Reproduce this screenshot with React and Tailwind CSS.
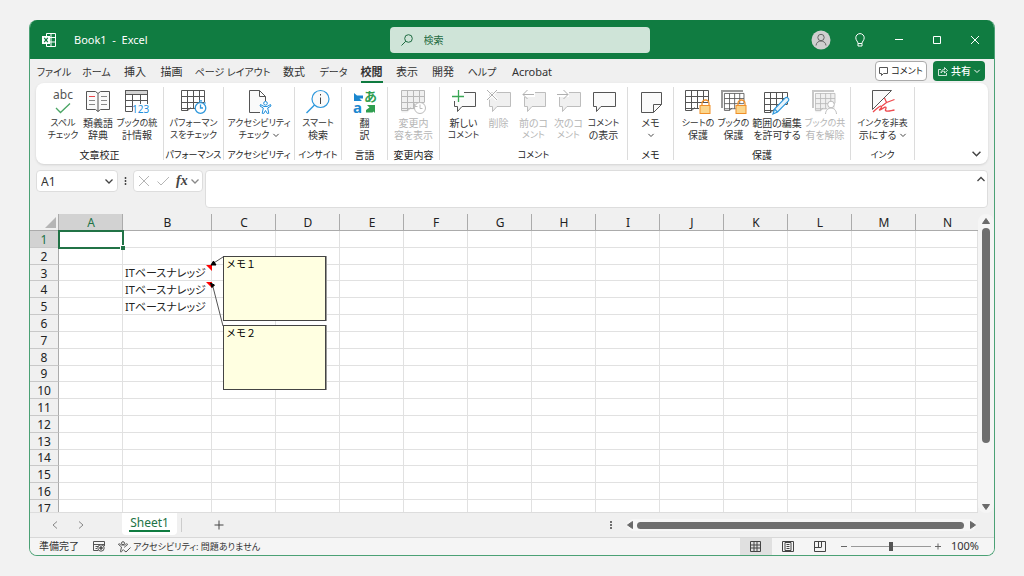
import React from "react";

const cols = "ABCDEFGHIJKLMN".split("");
const rows = Array.from({ length: 17 }, (_, i) => i + 1);
const memoRows = [3, 4, 5];

// Labels made mostly of katakana are set one step smaller so that they stay compact.
const isKana = (s) => (s.match(/[ァ-ヶー]/g) || []).length >= 3;

function Svg({ w = 24, h = 24, vb, className = "", children }) {
  return (
    <svg
      width={w}
      height={h}
      viewBox={vb || `0 0 ${w} ${h}`}
      fill="none"
      stroke="#555"
      strokeWidth="1"
      aria-hidden="true"
      className={`shrink-0 overflow-visible ${className}`}
    >
      {children}
    </svg>
  );
}

function Chevron({ up, size = 8, color = "#444" }) {
  return (
    <Svg w={size} h={size} vb="0 0 8 8">
      <path d={up ? "M0.5 6 4 2.5 7.5 6" : "M0.5 2.5 4 6 7.5 2.5"} stroke={color} strokeWidth="1.3" />
    </Svg>
  );
}

function Mesh({ stroke = "#555", fill = "none" }) {
  return (
    <g stroke={stroke}>
      <path d="M0.5 0.5H23.5V19.5H9L6.5 22.5H0.5Z" fill={fill} stroke="none" />
      <path d="M23.5 12V0.5H0.5V20.5H7L9.5 17.5M0.5 6.5H23.5M0.5 12.5H23.5M0.5 18.5H14M6.5 0.5V20M12.5 0.5V18.5M18.5 0.5V12.5" />
    </g>
  );
}

const Bubble = ({ stroke = "#555", fill = "#fff" }) => (
  <path d="M2.5 2.5H23.5V16.5H10L5.5 21.5V16.5H2.5Z" stroke={stroke} fill={fill} />
);

const Lock = () => (
  <g stroke="#f09028">
    <path d="M17 16.5V13.5a3 3 0 0 1 7 0V16.5" fill="none" strokeWidth="1.3" />
    <rect x="15" y="15.5" width="10" height="8" fill="#fbd68c" />
  </g>
);

const icons = {
  spell: (
    <Svg>
      <text x="12" y="9" textAnchor="middle" fontSize="12" fill="#555" stroke="none" fontFamily="Noto Sans">abc</text>
      <path d="M5 18 9.5 22.5 19 13.5" stroke="#4aa564" strokeWidth="1.3" />
    </Svg>
  ),
  book: (
    <Svg>
      <path d="M0.5 1.5H9.5L12 3.5 14.5 1.5H23.5V19.5H14.5L12 21.5 9.5 19.5H0.5ZM12 3.5V21.5" fill="#fafafa" />
      <path d="M3 6.5H9" stroke="#e8474c" />
      <path d="M3 10.5H9M3 14.5H9M15 6.5H21M15 10.5H21M15 14.5H21" stroke="#888" />
    </Svg>
  ),
  stats: (
    <Svg>
      <path d="M0.5 0.5H22.5V4.5H0.5Z" fill="#d4d4d4" />
      <path d="M22.5 14V0.5H0.5V21.5H7M0.5 10.5H22.5M0.5 16.5H8M7.5 4.5V21.5M15.5 4.5V14" />
      <text x="7" y="23" fontSize="10" fill="#1f8fdc" stroke="none" fontFamily="Noto Sans">123</text>
    </Svg>
  ),
  perf: (
    <Svg w={26}>
      <Mesh />
      <circle cx="19.5" cy="18" r="5.3" stroke="#2e98dc" fill="#fff" strokeWidth="1.3" />
      <path d="M19.5 14.5V18H22M18 10.8H21M23.5 13.5 24.5 12.5" stroke="#2e98dc" strokeWidth="1.3" />
    </Svg>
  ),
  access: (
    <Svg>
      <path d="M13 22.5H2.5V0.5H12.5L18.5 6.5V11M12.5 0.5V6.5H18.5" fill="#fafafa" />
      <g stroke="#1f8fdc" fill="#fff">
        <circle cx="18.5" cy="13.3" r="1.8" />
        <path d="M13.5 14.5 17 16.5H20L23.5 14.5 24 16 20.7 18 21.8 23.3 20.3 23.5 18.5 20.5 16.7 23.5 15.2 23.3 16.3 18 13 16Z" />
      </g>
    </Svg>
  ),
  smart: (
    <Svg>
      <circle cx="14.5" cy="9" r="8.5" stroke="#2e98dc" fill="#fafafa" strokeWidth="1.2" />
      <path d="M8.5 15 0.5 23" stroke="#2e98dc" strokeWidth="1.4" />
      <path d="M14.5 7.5V14M14.5 4V5.5" stroke="#444" />
    </Svg>
  ),
  translate: (
    <Svg>
      <text x="11" y="11" fontSize="13" fontWeight="700" fill="#2f9e50" stroke="none" fontFamily="Noto Sans CJK JP">あ</text>
      <text x="0" y="23" fontSize="15" fontWeight="700" fill="#1b87cf" stroke="none" fontFamily="Noto Sans">a</text>
      <path d="M1 3V11H9L6.5 8.5H10V5.500H4Z" fill="#1b87cf" stroke="none" />
      <path d="M22 23V15H14L16.5 17.5 13 20V22.500H19.5L20.500 21.500Z" fill="#2f9e50" stroke="none" />
    </Svg>
  ),
  changes: (
    <Svg w={26}>
      <Mesh stroke="#b8b8b8" fill="#f0f0f0" />
      <circle cx="19" cy="18" r="5.5" stroke="#bcbcbc" fill="#fff" />
      <path d="M19 14.5V18.5H21.5M13.5 13.5V16.5H16.5" stroke="#bcbcbc" />
    </Svg>
  ),
  newComment: (
    <Svg>
      <Bubble fill="#fafafa" />
      <path d="M0 0H12V9H3.500V11H0Z" fill="#fff" stroke="none" />
      <path d="M2.500 9V14M6 0V12M0 6H12" stroke="none" />
      <path d="M6.500 0V12M0 6.500H12" stroke="#3aa655" strokeWidth="1.3" />
    </Svg>
  ),
  del: (
    <Svg>
      <Bubble stroke="#bdbdbd" fill="#f0f0f0" />
      <path d="M0 0 10 10M10 0 0 10" stroke="#fff" strokeWidth="3" />
      <path d="M0 0 10 10M10 0 0 10" stroke="#b0b0b0" />
    </Svg>
  ),
  prev: (
    <Svg>
      <Bubble stroke="#bdbdbd" fill="#f0f0f0" />
      <path d="M13 4.5H1" stroke="#fff" strokeWidth="5" />
      <path d="M12 4.5H1M5.5 0 1 4.5 5.5 9" stroke="#b0b0b0" />
    </Svg>
  ),
  next: (
    <Svg>
      <Bubble stroke="#bdbdbd" fill="#f0f0f0" />
      <path d="M0 4.5H12" stroke="#fff" strokeWidth="5" />
      <path d="M0 4.5H11M6.5 0 11 4.5 6.5 9" stroke="#b0b0b0" />
    </Svg>
  ),
  showComment: (
    <Svg>
      <path d="M1.5 2.5H23.5V16.5H9L4.5 21.5V16.5H1.5Z" fill="#fafafa" />
    </Svg>
  ),
  memo: (
    <Svg>
      <path d="M2.5 2.5H22.5V14.5L14.5 22.5H2.5ZM14.5 22.5V14.5H22.5" fill="#fafafa" />
    </Svg>
  ),
  sheetLock: (
    <Svg w={26}><Mesh /><Lock /></Svg>
  ),
  bookLock: (
    <Svg w={26}>
      <path d="M1 18V1H22" stroke="#999" strokeWidth="2" />
      <g transform="translate(3 3) scale(.85)"><Mesh /></g>
      <Lock />
    </Svg>
  ),
  edit: (
    <Svg w={26}>
      <g transform="translate(0 2)"><Mesh /></g>
      <path d="M9 24 10.5 19 21 8.2a2 2 0 0 1 3.2 3L13.5 22ZM10.5 19 13.5 22" stroke="#2e98dc" fill="#e8f4fc" strokeWidth="1.2" />
    </Svg>
  ),
  unshare: (
    <Svg w={26}>
      <path d="M1 18V1H22" stroke="#c8c8c8" strokeWidth="2" />
      <g transform="translate(3 3) scale(.85)"><Mesh stroke="#b8b8b8" fill="#f0f0f0" /></g>
      <g stroke="#bcbcbc" fill="#fff">
        <path d="M13.5 24C14 16 24 16 24.5 24" />
        <circle cx="19" cy="14.5" r="3.3" />
      </g>
    </Svg>
  ),
  ink: (
    <Svg>
      <path d="M1.5 0.5H20.5L1.5 19.5Z" fill="#fafafa" />
      <path d="M13.5 8 15.500 12.500 23.5 9.5M15.500 12.500 11 16M2 22C6 18 10 15 10.500 16.500S7 20.500 9 20C12 18.500 14.500 16 15 17.500S13 20.500 15.500 21 20 20.500 23.500 20" stroke="#ee4b4f" strokeWidth="1.3" />
    </Svg>
  ),
};

const groups = [
  { name: "文章校正", w: "w-[128px]", pad: "pl-[9px]", items: [
    ["spell", "スペル", "チェック", "w-9"],
    ["book", "類義語", "辞典", "w-[34px]"],
    ["stats", "ブックの統", "計情報", "w-11"],
  ] },
  { name: "パフォーマンス", w: "w-[60px]", items: [["perf", "パフォーマン", "スをチェック", "w-full"]] },
  { name: "アクセシビリティ", w: "w-[71px]", items: [["access", "アクセシビリティ", "チェック", "w-full", "menu"]] },
  { name: "インサイト", w: "w-[47px]", items: [["smart", "スマート", "検索", "w-full"]] },
  { name: "言語", w: "w-[46px]", items: [["translate", "翻", "訳", "w-full"]] },
  { name: "変更内容", w: "w-[52px]", items: [["changes", "変更内", "容を表示", "w-full", "off"]] },
  { name: "コメント", w: "w-[188px]", pad: "pl-[6px]", items: [
    ["newComment", "新しい", "コメント", "w-[35px]"],
    ["del", "削除", "", "w-[35px]", "off"],
    ["prev", "前のコ", "メント", "w-[35px]", "off"],
    ["next", "次のコ", "メント", "w-[35px]", "off"],
    ["showComment", "コメント", "の表示", "w-[35px]"],
  ] },
  { name: "メモ", w: "w-[46px]", items: [["memo", "メモ", "", "w-full", "menu"]] },
  { name: "保護", w: "w-[177px]", pad: "pl-[6px]", items: [
    ["sheetLock", "シートの", "保護", "w-9"],
    ["bookLock", "ブックの", "保護", "w-[35px]"],
    ["edit", "範囲の編集", "を許可する", "w-[52px]"],
    ["unshare", "ブックの共", "有を解除", "w-11", "off"],
  ] },
  { name: "インク", w: "w-16", items: [["ink", "インクを非表", "示にする", "w-full", "menu"]] },
];

const tabs = [
  ["ファイル", "w-11"], ["ホーム", "w-[41px]"], ["挿入", "w-9"], ["描画", "w-[37px]"],
  ["ページ レイアウト", "w-[85px]"], ["数式", "w-[38px]"], ["データ", "w-[41px]"], ["校閲", "w-[35px]"],
  ["表示", "w-9"], ["開発", "w-9"], ["ヘルプ", "w-[42px]"], ["Acrobat", "w-[58px]"],
];

const labelSize = (s) => (isKana(s) ? "text-[9px]" : "text-[10px]");

function RibbonButton({ item }) {
  const [icon, a, b, w, mode] = item;
  return (
    <button
      type="button"
      disabled={mode === "off"}
      className={`flex shrink-0 flex-col items-center whitespace-nowrap leading-3 ${w} ${mode === "off" ? "text-[#b5b5b5]" : "text-[#333]"}`}
    >
      {icons[icon]}
      <span className={`mt-[3px] ${labelSize(a)}`}>{a}</span>
      <span className={`flex min-h-3 items-center gap-1 ${labelSize(b)}`}>
        {b}
        {mode === "menu" && <Chevron size={6} />}
      </span>
    </button>
  );
}

function TitleBar() {
  return (
    <header className="flex h-[39px] shrink-0 items-center bg-[#107c41] text-white">
      <div className="flex flex-1 items-center pl-3">
        <Svg w={14} h={14}>
          <path d="M4.5 0.5H13.5V13.5H4.5ZM9 0.5V13.5M4.5 4.5H13.5M4.5 9H13.5" stroke="#fff" />
          <rect x="0" y="3" width="8" height="8" fill="#fff" stroke="none" />
          <path d="M2.2 4.8 5.8 9.2M5.8 4.8 2.2 9.2" stroke="#107c41" strokeWidth="1.2" />
        </Svg>
        <h1 className="ml-[18px] whitespace-pre pt-px text-[11px]">Book1  -  Excel</h1>
      </div>
      <label className="ml-4 flex h-[26px] w-[260px] shrink-0 items-center rounded-sm bg-[#cfe4d8] pl-[11px]">
        <Svg w={12} h={12}>
          <circle cx="7.5" cy="4.5" r="3.8" stroke="#1e6b41" />
          <path d="M4.8 7.2 0.5 11.5" stroke="#1e6b41" />
        </Svg>
        <input
          aria-label="検索"
          placeholder="検索"
          className="ml-[11px] w-48 bg-transparent pt-px text-[10px] text-[#1e6b41] outline-none placeholder:text-[#1e6b41]"
        />
      </label>
      <div className="flex flex-1 items-center justify-end gap-[26px] pr-[13px]">
        <button type="button" aria-label="アカウント" className="-mr-1">
          <Svg w={20} h={20}>
            <circle cx="10" cy="10" r="9.5" fill="#cfcfcf" stroke="none" />
            <circle cx="10" cy="7.5" r="3.2" stroke="#666" />
            <path d="M5 15.5C5.5 9.5 14.5 9.5 15 15.5" stroke="#666" />
          </Svg>
        </button>
        <button type="button" aria-label="ヒント">
          <Svg w={14} h={14}>
            <path d="M5 10.5C5 8.5 2.8 7.5 2.8 4.8a4.2 4.2 0 0 1 8.4 0C11.2 7.5 9 8.5 9 10.5ZM5 10.5V13H9V10.5" stroke="#fff" />
          </Svg>
        </button>
        <button type="button" aria-label="最小化">
          <Svg w={12} h={12}><path d="M2 5.5H10" stroke="#fff" /></Svg>
        </button>
        <button type="button" aria-label="最大化">
          <Svg w={12} h={12}><path d="M2.5 2.5H9.5V9.5H2.5Z" stroke="#fff" /></Svg>
        </button>
        <button type="button" aria-label="閉じる">
          <Svg w={12} h={12}><path d="M2 2 10 10M10 2 2 10" stroke="#fff" /></Svg>
        </button>
      </div>
    </header>
  );
}

function TabStrip() {
  return (
    <nav className="flex h-6 shrink-0 items-center pl-[2px] pr-[9px]">
      {tabs.map(([t, w]) => (
        <button
          key={t}
          type="button"
          className={`flex h-6 shrink-0 items-end justify-center whitespace-nowrap leading-4 text-[#333] ${isKana(t) ? "text-[10px]" : "text-[11px]"} ${w}`}
        >
          <span className={`border-b-2 pb-px ${t === "校閲" ? "border-[#107c41] font-bold" : "border-transparent"}`}>{t}</span>
        </button>
      ))}
      <div className="ml-auto flex gap-[6px]">
        <button type="button" className="flex h-5 w-[52px] items-center justify-center gap-[3px] whitespace-nowrap rounded border border-[#aaa] bg-white text-[9px] text-[#222]">
          <Svg w={9} h={9}><path d="M0.5 0.5H8.5V6.5H4.500L2.5 8.500V6.5H0.5Z" /></Svg>
          コメント
        </button>
        <button type="button" className="flex h-5 w-[52px] items-center justify-center gap-[3px] whitespace-nowrap rounded bg-[#107c41] text-[10px] font-medium text-white">
          <Svg w={10} h={10}><path d="M3 3.5H0.5V9.5H8.5V7M3 7C3 4.5 4.5 3.5 6.5 3.5V1.5L9.5 4.5 6.5 7V5.2C4.5 5.2 3.5 6 3 7Z" stroke="#fff" strokeWidth=".8" /></Svg>
          共有
          <Chevron size={6} color="#fff" />
        </button>
      </div>
    </nav>
  );
}

function Ribbon() {
  return (
    <div className="mx-[6px] flex h-[81px] shrink-0 rounded-lg bg-white shadow-sm">
      {groups.map((g) => (
        <section key={g.name} aria-label={g.name} className={`my-1 shrink-0 border-r border-[#dcdcdc] ${g.w}`}>
          <div className={`flex h-[59px] items-start pt-[3px] ${g.pad || ""}`}>
            {g.items.map((it) => <RibbonButton key={it[0]} item={it} />)}
          </div>
          <p className={`flex justify-center whitespace-nowrap pt-px leading-4 text-[#222] ${labelSize(g.name)}`}>{g.name}</p>
        </section>
      ))}
      <button type="button" aria-label="リボンを折りたたむ" className="ml-auto mr-[7px] self-end pb-[6px]">
        <Chevron size={9} />
      </button>
    </div>
  );
}

function FormulaBar() {
  return (
    <div className="flex shrink-0 items-start px-[6px] pt-[6px]">
      <div className="flex h-[22px] w-[82px] shrink-0 items-center rounded border border-[#ddd] bg-white pl-1 pr-1">
        <input aria-label="名前ボックス" defaultValue="A1" className="w-full min-w-0 bg-transparent pt-px text-[12px] text-[#333] outline-none" />
        <button type="button" aria-label="名前の一覧"><Chevron /></button>
      </div>
      <Svg w={15} h={22} vb="0 0 15 22"><path d="M7.5 7V9M7.5 10V12M7.5 13V15" stroke="#444" strokeWidth="1.5" /></Svg>
      <div className="flex h-[22px] w-[70px] shrink-0 items-center gap-[7px] rounded border border-[#ddd] bg-white pl-1">
        <button type="button" aria-label="キャンセル" disabled>
          <Svg w={12} h={12}><path d="M1 1 11 11M11 1 1 11" stroke="#b5b5b5" /></Svg>
        </button>
        <button type="button" aria-label="入力" disabled>
          <Svg w={12} h={12}><path d="M0.5 6.5 4 10 12 2" stroke="#b5b5b5" /></Svg>
        </button>
        <button type="button" aria-label="関数の挿入" className="flex items-center gap-[3px] font-['Liberation_Serif',serif] text-[14px] font-bold italic leading-4 text-[#444]">
          fx
          <Chevron color="#888" />
        </button>
      </div>
      <div className="ml-[2px] flex h-[38px] flex-1 items-start rounded border border-[#ddd] bg-white pr-[2px]">
        <textarea aria-label="数式バー" className="h-9 flex-1 resize-none bg-transparent px-1 text-[12px] outline-none" />
        <button type="button" aria-label="数式バーを折りたたむ" className="pt-1"><Chevron up /></button>
      </div>
    </div>
  );
}

function Memo({ children }) {
  return (
    <div className="h-[65px] border border-[#444] bg-[#ffffe1] pl-[2px] text-[10px] leading-[14px] text-black shadow-[1px_0_0_#999] [font-feature-settings:normal]">
      {children}
    </div>
  );
}

function Sheet() {
  return (
    <main className="mt-[6px] flex min-h-0 flex-1">
      <div className="relative min-w-0 flex-1 overflow-hidden border-b border-[#ddd]">
        <table className="h-[303px] w-full table-fixed border-separate border-spacing-0 bg-white text-[12px] leading-3 text-[#222]">
          <colgroup>
            <col className="w-[29px]" />
            {cols.map((c) => (
              <col key={c} className={c === "N" ? "" : c === "B" ? "w-[89px]" : "w-16"} />
            ))}
          </colgroup>
          <thead>
            <tr className="h-[17px]">
              <th aria-label="すべて選択" className="border-b border-r border-[#ababab] bg-[#f0f0f0] p-0">
                <Svg w={11} h={11} className="ml-auto mr-[2px]"><path d="M11 0V11H0Z" fill="#b5b5b5" stroke="none" /></Svg>
              </th>
              {cols.map((c) => (
                <th
                  key={c}
                  scope="col"
                  className={`border-b border-r border-[#ababab] p-0 pl-px pt-[2px] font-normal last:border-r-0 ${c === "A" ? "bg-[#d2d2d2] text-[#217346]" : "bg-[#f0f0f0]"}`}
                >
                  {c}
                </th>
              ))}
            </tr>
          </thead>
          <tbody>
            {rows.map((r) => (
              <tr key={r}>
                <th
                  scope="row"
                  className={`border-b border-r border-b-[#c8c8c8] border-r-[#ababab] p-0 pt-[2px] font-normal ${r === 1 ? "bg-[#d2d2d2] text-[#217346]" : "bg-[#f0f0f0]"}`}
                >
                  {r}
                </th>
                {cols.map((c) => (
                  <td key={c} className="whitespace-nowrap border-b border-r border-[#e1e1e1] p-0 pl-[2px] pt-px text-[11px]">
                    {c === "B" && memoRows.includes(r) ? "ITベースナレッジ" : ""}
                  </td>
                ))}
              </tr>
            ))}
          </tbody>
        </table>

        <div className="absolute left-7 top-4 h-[19px] w-[66px] border-2 border-[#217346]">
          <span className="absolute -bottom-[3px] -right-[3px] size-[5px] border-l border-t border-white bg-[#217346]" />
        </div>
        <div className="absolute left-[193px] top-[42px] flex w-[103px] flex-col gap-1">
          <Memo>メモ１</Memo>
          <Memo>メモ２</Memo>
        </div>
        <Svg w={20} h={76} className="absolute left-[175px] top-[40px]">
          <path d="M1 11H7V17ZM1 28H7V34Z" fill="#f00" stroke="none" />
          <path d="M18 3 8 9.5M18 72 7.5 31" stroke="#555" />
          <path d="M6 11 11 11 8.5 7ZM5.5 29 9.5 31 7 33.5Z" fill="#000" stroke="#000" />
        </Svg>
      </div>
      <div aria-hidden="true" className="flex w-4 shrink-0 flex-col items-center rounded-lg bg-[#f5f5f5] pt-1">
        <Svg w={8} h={6}><path d="M4 0.5 7.5 5.5H0.5Z" fill="#6a6a6a" stroke="#6a6a6a" /></Svg>
        <div className="mt-1 flex flex-1 flex-col">
          <div className="w-2 flex-[214] rounded-full bg-[#6e6e6e]" />
          <div className="flex-[61]" />
        </div>
        <Svg w={8} h={6} className="mb-[3px]"><path d="M4 5.5 7.5 0.5H0.5Z" fill="#6a6a6a" stroke="#6a6a6a" /></Svg>
      </div>
    </main>
  );
}

function SheetTabs() {
  return (
    <div className="flex h-[24px] shrink-0 items-center pr-[18px]">
      <button type="button" aria-label="前のシート" className="ml-[21px]">
        <Svg w={8} h={8}><path d="M6 0.500 2 4 6 7.500" stroke="#888" /></Svg>
      </button>
      <button type="button" aria-label="次のシート" className="ml-[18px]">
        <Svg w={8} h={8}><path d="M2 0.500 6 4 2 7.500" stroke="#888" /></Svg>
      </button>
      <button type="button" className="ml-[37px] flex h-[22px] w-[55px] justify-center self-start rounded-b bg-white text-[12px] leading-5 text-[#217346]">
        <span className="h-[19px] border-b-2 border-[#107c41] px-px">Sheet1</span>
      </button>
      <span className="ml-1 h-[14px] w-px bg-[#ccc]" />
      <button type="button" aria-label="新しいシート" className="ml-8">
        <Svg w={10} h={10}><path d="M5 0.5V9.5M0.5 5H9.5" stroke="#444" /></Svg>
      </button>
      <Svg w={4} h={12} className="ml-auto"><path d="M2 2V4M2 5V7M2 8V10" stroke="#444" strokeWidth="1.5" /></Svg>
      <div aria-hidden="true" className="ml-[14px] flex h-3 w-[349px] items-center justify-between rounded-full bg-[#f6f6f6]">
        <Svg w={6} h={8}><path d="M0.5 4 5.5 0.5V7.5Z" fill="#6a6a6a" stroke="#6a6a6a" /></Svg>
        <div className="ml-1 mr-[6px] h-[7px] flex-1 rounded-full bg-[#6e6e6e]" />
        <Svg w={6} h={8}><path d="M5.5 4 0.5 0.5V7.5Z" fill="#6a6a6a" stroke="#6a6a6a" /></Svg>
      </div>
    </div>
  );
}

function StatusBar() {
  return (
    <footer className="flex h-[18px] shrink-0 items-center whitespace-nowrap border-t border-[#d8d8d8] bg-[#f5f5f5] pl-[9px] pr-[15px] text-[10px] text-[#333]">
      <span>準備完了</span>
      <button type="button" aria-label="マクロの記録" className="ml-[14px]">
        <Svg w={12} h={11}>
          <path d="M11.5 5V0.5H0.5V9.5H5M0.5 3.5H11.5M2.5 5.5H5M2.5 7.5H4" />
          <circle cx="8" cy="7" r="3.2" fill="#f5f5f5" />
          <circle cx="8" cy="7" r="1.3" fill="#555" />
        </Svg>
      </button>
      <button type="button" className="ml-[13px] flex items-center gap-[2px] text-[9px]">
        <Svg w={13} h={12}>
          <circle cx="5" cy="2.200" r="1.500" />
          <path d="M0.500 3.500C0.500 2.500 1.500 2.500 3.500 4H6.500C8.500 2.500 9.500 2.500 9.500 3.500S7 5 6.500 6V6.500M3.500 6 2.500 10.500C2.500 11.500 3.500 11.500 5 8.500M0.500 3.500 3.500 6M5.500 9 8 11 12.500 6.500" />
        </Svg>
        アクセシビリティ: 問題ありません
      </button>
      <div className="ml-auto flex items-center">
        <button type="button" aria-label="標準" className="flex h-[17px] w-8 items-center justify-center bg-[#e0e0e0]">
          <Svg w={11} h={11}><path d="M0.5 0.5H10.5V10.5H0.5ZM4 0.5V10.5M7 0.5V10.5M0.5 4H10.5M0.5 7H10.5" stroke="#444" /></Svg>
        </button>
        <button type="button" aria-label="ページ レイアウト" className="flex h-[17px] w-8 items-center justify-center">
          <Svg w={12} h={11}><path d="M0.5 0.5H11.5V10.5H0.5ZM3 1.5H9V9.5H3ZM4.5 3.5H7.5M4.5 5.5H7.5M4.5 7.5H7.5" stroke="#444" /></Svg>
        </button>
        <button type="button" aria-label="改ページ プレビュー" className="flex h-[17px] w-8 items-center justify-center">
          <Svg w={12} h={11}><path d="M0.5 0.5H11.5V10.5H0.5ZM4.5 0.5V6M7.5 0.5V6M0.5 6.5H7.5" stroke="#444" /></Svg>
        </button>
        <button type="button" aria-label="縮小" className="ml-1">
          <Svg w={8} h={8}><path d="M1 3.5H7" stroke="#666" /></Svg>
        </button>
        <input
          type="range"
          aria-label="ズーム"
          min="0"
          max="200"
          defaultValue="100"
          className="mx-[3px] h-[10px] w-20 appearance-none bg-[linear-gradient(#999,#999)] bg-[length:100%_1px] bg-center bg-no-repeat [&::-webkit-slider-thumb]:h-[9px] [&::-webkit-slider-thumb]:w-1 [&::-webkit-slider-thumb]:appearance-none [&::-webkit-slider-thumb]:bg-[#555]"
        />
        <button type="button" aria-label="拡大">
          <Svg w={8} h={8}><path d="M1 3.5H7M4 0.500V6.500" stroke="#666" /></Svg>
        </button>
        <span className="ml-[9px] text-[11px]">100%</span>
      </div>
    </footer>
  );
}

export default function App() {
  return (
    <div className="flex h-screen bg-[#f2f2f2] px-[29px] py-5 font-['Noto_Sans','Noto_Sans_CJK_JP',sans-serif] [font-feature-settings:'palt']">
      <div className="flex min-w-0 flex-1 flex-col overflow-hidden rounded-lg border border-t-0 border-[#4ba175] bg-[#f0f0f0]">
        <TitleBar />
        <TabStrip />
        <Ribbon />
        <FormulaBar />
        <Sheet />
        <SheetTabs />
        <StatusBar />
      </div>
    </div>
  );
}
